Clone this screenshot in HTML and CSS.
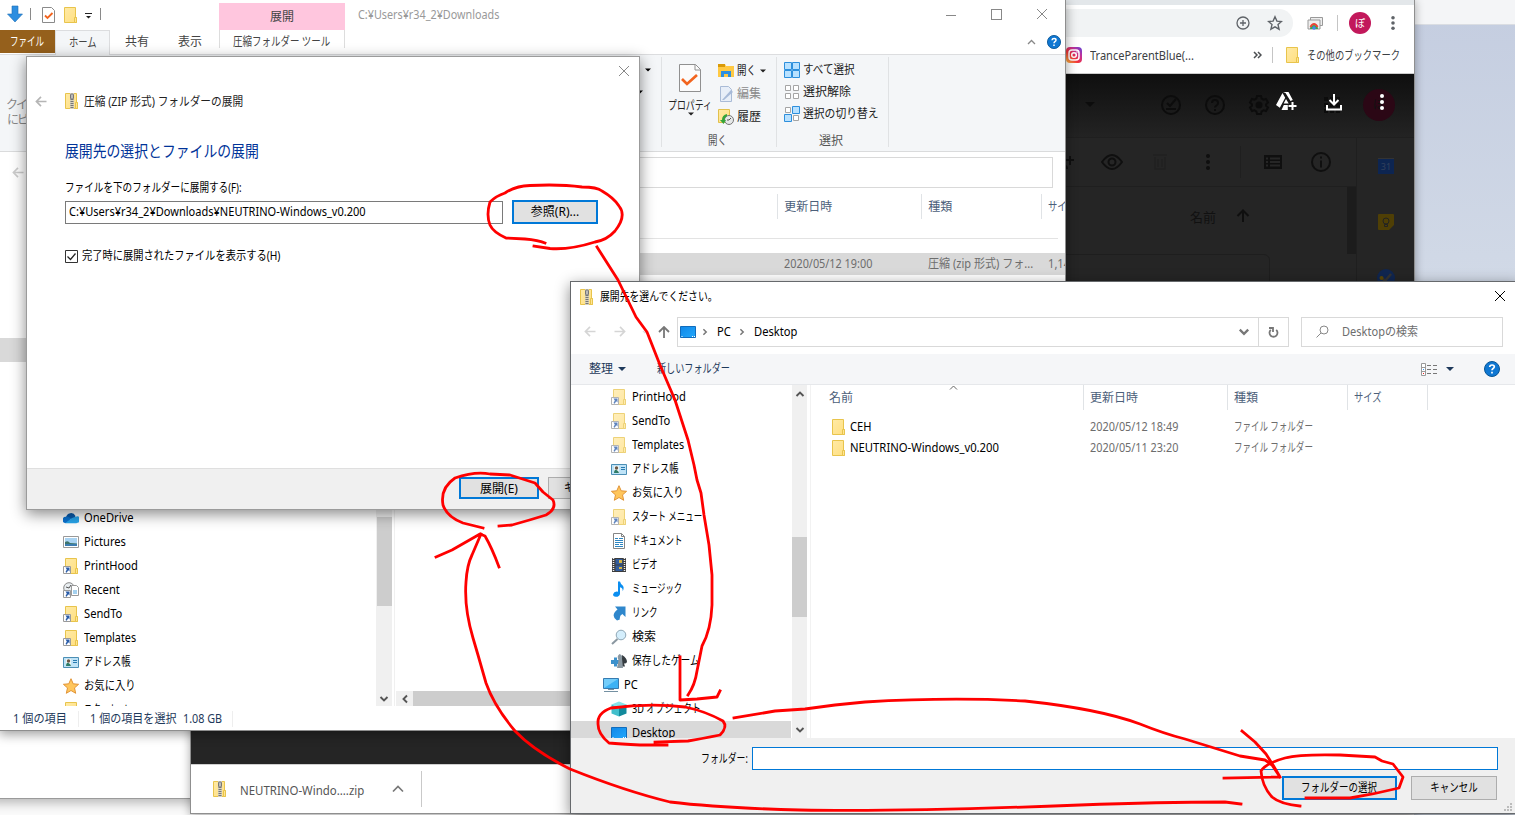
FILE: index.html
```html
<!DOCTYPE html>
<html lang="ja">
<head>
<meta charset="utf-8">
<title>展開先を選んでください。</title>
<link rel="stylesheet" href="styles.css">
</head>
<body>
<svg class="defs" width="0" height="0">
  <defs>
    <linearGradient id="gold" x1="0" y1="0" x2="1" y2="1"><stop offset="0" stop-color="#ffeaa6"/><stop offset="1" stop-color="#ffdf80"/></linearGradient>
    <linearGradient id="screen" x1="0" y1="0" x2="1" y2="1"><stop offset="0" stop-color="#1188e8"/><stop offset="1" stop-color="#22a8fc"/></linearGradient>
    <linearGradient id="insta" x1="0" y1="1" x2="1" y2="0"><stop offset="0" stop-color="#fdc13c"/><stop offset=".4" stop-color="#f3313b"/><stop offset=".7" stop-color="#c0309c"/><stop offset="1" stop-color="#5a45d8"/></linearGradient>
  </defs>
  <symbol id="folder" viewBox="0 0 16 16"><path d="M2.5.5h11v10h1v5h-12z" fill="url(#gold)" stroke="#e8c44c"/><path d="M12.5 15.500v-5h2v5z" fill="#ffe594" stroke="#e8c44c"/></symbol>
  <symbol id="link-folder" viewBox="0 0 16 16"><use href="#folder" width="16" height="16"/><path d="M.5 8.500h7v7h-7z" fill="#fff" stroke="#9a9a9a"/><path d="M2.500 9.500h4v4l-1.300-1.300-1.500 2.500-1.200-.8 1.300-2.500z" fill="#2a5ca8"/></symbol>
  <symbol id="zip" viewBox="0 0 16 16"><path d="M1.500.5h11v9h1v6h-12z" fill="url(#gold)" stroke="#e8c44c"/><path d="M11.500 15.500v-6h2v6z" fill="#ffe594" stroke="#e8c44c"/><path d="M6 0h4v16H6z" fill="#d8d2bd"/><path d="M8 6v10" stroke="#777" stroke-width="3" stroke-dasharray="1 1"/><rect x="6.500" y="1" width="3" height="5" rx="1" fill="#bbb" stroke="#777"/></symbol>
  <symbol id="onedrive" viewBox="0 0 16 16"><path d="M3 7.500A5 5 0 0 1 12.500 6L11 10z" fill="#0a5cad"/><path d="M2.500 13A3 3 0 0 1 3 6.800Q5 6 8 8.500L6 13z" fill="#0b72cf"/><path d="M2 13.200L9 8l4.500-1.500a3 3 0 0 1 1.500 6q-.6.700-2 .700z" fill="#28a5ea"/></symbol>
  <symbol id="picture" viewBox="0 0 16 16"><path d="M.5 2.500h15v11H.5z" fill="#fff" stroke="#999"/><path d="M2 4h12v8H2z" fill="#a9d3f2"/><path d="M2 8q3-2 5 1l7 .5V12H2z" fill="#3d746c"/><path d="M2 10h12v2H2z" fill="#3c7db0"/></symbol>
  <symbol id="recent" viewBox="0 0 16 16"><circle cx="6" cy="6" r="5.300" fill="#e8edf0" stroke="#888"/><path d="M3 5l3 1 2-3" fill="none" stroke="#555"/><path d="M8.500 3.500h5l2 2v8h-7z" fill="#fff" stroke="#999"/><path d="M10 9h4M10 11h4" stroke="#4aa3df"/><path d="M.5 8.500h7v7h-7z" fill="#fff" stroke="#9a9a9a"/><path d="M2.500 9.500h4v4l-1.300-1.300-1.500 2.500-1.200-.8 1.300-2.500z" fill="#2a5ca8"/></symbol>
  <symbol id="contact" viewBox="0 0 16 16"><path d="M.5 3.500h15v10H.5z" fill="#bfe3f7" stroke="#4c8fb5"/><path d="M3 5h5v7H3z" fill="#edf5f5"/><circle cx="5.500" cy="7" r="1.700" fill="#6b5846"/><path d="M3 12q.3-4 2.500-3T8 12z" fill="#2e7c68"/><path d="M10 6.500h4M10 8.500h4" stroke="#287aaf"/></symbol>
  <symbol id="star" viewBox="0 0 16 16"><path d="M8 .7l2.200 5.100 5.400.5-4.100 3.600 1.200 5.400L8 12.500l-4.700 2.800 1.200-5.400L.4 6.300l5.400-.5z" fill="#ffc65c" stroke="#e19438"/></symbol>
  <symbol id="document" viewBox="0 0 16 16"><path d="M2.500.5h8l3 3v12h-11z" fill="#fff" stroke="#858585"/><path d="M10.500.5v3h3" fill="none" stroke="#858585"/><path d="M4 5.500h3M8 5.500h4M4 7.500h8M4 9.500h8M4 11.500h4M9 11.500h3M4 13.500h8" stroke="#2e86c1"/></symbol>
  <symbol id="video" viewBox="0 0 16 16"><path d="M1 1h14v14H1z" fill="#3c3c3c"/><path d="M2.500 1v14M13.500 1v14" stroke="#eee" stroke-width="1.500" stroke-dasharray="1 1"/><path d="M4.500 2h7v5.500h-7zM4.500 8.500h7V14h-7z" fill="#315c9d"/><path d="M8 3h3v3H8zM8 10h3v2H8z" fill="#d5b33f"/></symbol>
  <symbol id="music" viewBox="0 0 16 16"><path d="M7 .5h2q.5 2.300 2.500 3.800 2.200 2 .2 6Q12 7 9 6.300V13q-.8 3-4.200 2.800-3-.3-2.700-2.600Q3 10 7 10.700z" fill="#0b8ef0"/></symbol>
  <symbol id="shortcut" viewBox="0 0 16 16"><path d="M4 1.500h10.500V12l-3.200-3q-3 1.500-2.500 5.500L6 15.500Q-1 10.500 6.500 4.500z" fill="#2f87cc"/></symbol>
  <symbol id="magnifier" viewBox="0 0 16 16"><path d="M1 15l5.500-5" stroke="#8a97a0" stroke-width="2"/><circle cx="10" cy="6" r="4.800" fill="#d4eefc" stroke="#8fa7b5"/></symbol>
  <symbol id="games" viewBox="0 0 16 16"><path d="M0 7h3V4.500h3V7h2v4H6v2.500H3V11H0z" fill="#3c91cc"/><path d="M11 2q5 3 5 7-1 2-3 1.500l1 3h-3z" fill="#353b40"/><path d="M8.500 1q3.500 1 2.500 4.500L12 15H6l1.500-8Q5.500 3 8.500 1z" fill="#8b98a1"/></symbol>
  <symbol id="pc" viewBox="0 0 16 16"><path d="M.5 1.500h15v10H.5z" fill="#3cb2f5" stroke="#367bb0"/><path d="M1 2h14L1 11z" fill="#73cdfa"/><path d="M1 14.500h14M5 12.500h6" stroke="#7490a2"/></symbol>
  <symbol id="cube" viewBox="0 0 16 16"><path d="M8 .5l7.500 3L8 6.500.5 3.500z" fill="#86e3e9"/><path d="M.5 3.500L8 6.500v9l-7.500-3z" fill="#42bfcb"/><path d="M15.500 3.500L8 6.500v9l7.500-3z" fill="#128a9c"/></symbol>
  <symbol id="desktop" viewBox="0 0 16 16"><path d="M.5 2.500h15v11H.5z" fill="url(#screen)" stroke="#116cbc"/><path d="M1.500 12.500h2M12 12.500h3" stroke="#fff" stroke-dasharray="1 1"/></symbol>
  <symbol id="help" viewBox="0 0 16 16"><circle cx="8" cy="8" r="7.500" fill="#0f77d2" stroke="#075596"/><path d="M5.700 6q.2-2 2.400-2 2.200 0 2.200 1.800 0 1-1.200 1.700Q8 8.300 8 9.300M8 10.800v1.700" fill="none" stroke="#fff" stroke-width="1.700"/></symbol>
  <symbol id="back" viewBox="0 0 12 12"><path d="M12 6H1M6 1L1 6l5 5" fill="none" stroke="currentColor" stroke-width="1.800"/></symbol>
  <symbol id="cross" viewBox="0 0 12 12"><path d="M1 1l10 10M11 1L1 11" fill="none" stroke="currentColor"/></symbol>
  <symbol id="caret" viewBox="0 0 8 8"><path d="M0 2h8L4 6z" fill="currentColor"/></symbol>
  <symbol id="chev" viewBox="0 0 10 10"><path d="M1.500 3L5 6.500 8.500 3" fill="none" stroke="currentColor" stroke-width="1.900"/></symbol>
  <symbol id="checkdoc" viewBox="0 0 22 28"><path d="M.5.500h16l5 5v22h-21z" fill="#fbfbfb" stroke="#909090"/><path d="M16 .5v5.500h5.500" fill="none" stroke="#909090"/><path d="M3 15l5 5 10-9" fill="none" stroke="#f2641e" stroke-width="2.700"/></symbol>
  <symbol id="dots" viewBox="0 0 6 18"><circle cx="3" cy="3" r="2" fill="currentColor"/><circle cx="3" cy="9" r="2" fill="currentColor"/><circle cx="3" cy="15" r="2" fill="currentColor"/></symbol>
</svg>

<main class="screen">
  <section class="back-right"><div class="back-bar"></div></section>
  <section class="back-left"></section>

  <section class="chrome">
    <div class="tabstrip"></div>
    <div class="chrome-bar">
      <div class="omnibox">
        <svg width="14" height="14" viewBox="0 0 14 14"><circle cx="7" cy="7" r="6" fill="none" stroke="#5f6368" stroke-width="1.300"/><path d="M4 7h6M7 4v6" stroke="#5f6368" stroke-width="1.300"/></svg>
        <svg width="16" height="16" viewBox="0 0 16 16"><path d="M8 1.800l1.900 4.300 4.600.4-3.500 3.100 1.100 4.600L8 11.800l-4.100 2.400L5 9.600 1.500 6.500l4.600-.4z" fill="none" stroke="#5f6368" stroke-width="1.400"/></svg>
      </div>
      <svg class="media" width="16" height="14" viewBox="0 0 16 14"><path d="M3.500 4V1.500h12v8H13" fill="#eee" stroke="#999"/><path d="M1 4h12v9H1z" fill="#eee" stroke="#999"/><path d="M3 13a4 4 0 0 1 8 0z" fill="#34a853"/><path d="M3.500 11q1.500-3 3.500-3t3.500 3" fill="none" stroke="#ea4335" stroke-width="2"/><circle cx="7" cy="12" r="1.700" fill="#4285f4"/></svg>
      <span class="bar-sep"></span><span class="avatar">ぽ</span>
      <svg class="kebab" width="6" height="16"><use href="#dots"/></svg>
    </div>
    <div class="bookmarks">
      <svg width="16" height="16" viewBox="0 0 16 16"><rect width="16" height="16" rx="4" fill="url(#insta)"/><rect x="3" y="3" width="10" height="10" rx="3" fill="none" stroke="#fff" stroke-width="1.500"/><circle cx="8" cy="8" r="2.300" fill="none" stroke="#fff" stroke-width="1.500"/><circle cx="11" cy="5" r=".8" fill="#fff"/></svg>
      <span class="bm-name t f92">TranceParentBlue(...</span>
      <svg class="bm-more" width="9" height="8" viewBox="0 0 9 8"><path d="M1 1l3 3-3 3M5 1l3 3-3 3" fill="none" stroke="#4c4f52" stroke-width="1.500"/></svg>
      <span class="bm-sep"></span>
      <svg class="bm-folder" width="16" height="16"><use href="#folder"/></svg>
      <span class="t f78">その他のブックマーク</span>
    </div>
    <div class="page">
      <div class="drive-top">
        <svg class="dim" width="10" height="6" viewBox="0 0 10 6"><path d="M0 0h10L5 5z" fill="#0c0c0c"/></svg>
        <svg class="dim d1" width="22" height="22" viewBox="0 0 22 22"><circle cx="11" cy="11" r="9" fill="none" stroke="#0c0c0c" stroke-width="2"/><path d="M7 9l3 3 6-7M6 15h10" fill="none" stroke="#0c0c0c" stroke-width="2"/></svg>
        <svg class="dim d2" width="22" height="22" viewBox="0 0 22 22"><circle cx="11" cy="11" r="9" fill="none" stroke="#0c0c0c" stroke-width="2"/><path d="M8 9q0-3 3-3t3 3q0 1.500-1.500 2.500T11 13.500M11 15v2" fill="none" stroke="#0c0c0c" stroke-width="2"/></svg>
        <svg class="dim d2" width="22" height="22" viewBox="0 0 22 22"><path d="M9 2h4l.6 2.500 2 1.200L18 5l2 3.500-1.900 1.700v1.600L20 13.500 18 17l-2.400-.7-2 1.200L13 20H9l-.6-2.500-2-1.200L4 17l-2-3.500 1.900-1.700v-1.600L2 8.500 4 5l2.400.7 2-1.200z" fill="none" stroke="#0c0c0c" stroke-width="2"/><circle cx="11" cy="11" r="3.500" fill="#0c0c0c"/></svg>
        <svg class="d3" width="22" height="20" viewBox="0 0 22 20"><path d="M8 1h5.500l4.300 8-2.300 1-5-8zM7.500 2l2.700 4.700-5.400 10L1 14zM6.500 19l2.300-5h4v5zM11 8l2.700 4.500h-5z" fill="#fff"/><path d="M17.500 11v8M13.500 15h8" stroke="#fff" stroke-width="2"/></svg>
        <span class="grid-dl"><svg width="18" height="18" viewBox="0 0 18 18"><path d="M1 3h16M1 9h16M1 15h16" stroke="#0c0c0c" stroke-width="4" stroke-dasharray="4 2"/></svg><svg class="dl" width="16" height="17" viewBox="0 0 16 17"><path d="M8 0v10M3.500 6L8 10.500 12.500 6M1 11v4.500h14V11" fill="none" stroke="#fff" stroke-width="2"/></svg></span>
        <span class="dark-avatar">ぽ<svg width="6" height="18"><use href="#dots"/></svg></span>
      </div>
      <div class="drive-body">
        <div class="drive-main">
          <div class="drive-tools">
            <svg width="10" height="16" viewBox="0 0 10 16"><path d="M5 2v9M1 6h8M0 12q2 0 2 3" fill="none" stroke="#0f0f0f" stroke-width="2"/></svg>
            <svg class="g1" width="22" height="16" viewBox="0 0 22 16"><path d="M1 8q10-14 20 0Q11 22 1 8z" fill="none" stroke="#0f0f0f" stroke-width="2"/><circle cx="11" cy="8" r="3.500" fill="none" stroke="#0f0f0f" stroke-width="2"/></svg>
            <svg class="g2" width="16" height="18" viewBox="0 0 16 18"><path d="M1 2h14M3 4v12h10V4M6 6v8M10 6v8" fill="none" stroke="#202020" stroke-width="1.500"/></svg>
            <svg class="g3 ink" width="6" height="18"><use href="#dots"/></svg>
            <span class="g-sep"></span>
            <svg class="g4" width="18" height="14" viewBox="0 0 18 14"><path d="M0 0h18v14H0z" fill="#0f0f0f"/><path d="M2 3.500h2M6 3.500h10M2 7h2M6 7h10M2 10.500h2M6 10.500h10" stroke="#262626" stroke-width="1.800"/></svg>
            <svg class="g5" width="20" height="20" viewBox="0 0 20 20"><circle cx="10" cy="10" r="9" fill="none" stroke="#0f0f0f" stroke-width="2"/><path d="M10 4.500v2M10 8.500v7" stroke="#0f0f0f" stroke-width="2"/></svg>
          </div>
          <div class="drive-name"><span>名前</span><svg width="14" height="14" viewBox="0 0 14 14"><path d="M7 13V2M1.500 7L7 1.500 12.500 7" fill="none" stroke="#0f0f0f" stroke-width="2"/></svg></div>
          <div class="drive-card"></div>
        </div>
        <div class="drive-side">
          <span class="cal">31</span>
          <svg class="keep" width="16" height="16" viewBox="0 0 16 16"><path d="M1 0h14q1 0 1 1v10l-5 5H1q-1 0-1-1V1q0-1 1-1z" fill="#4f3f05"/><circle cx="8" cy="7" r="3" fill="none" stroke="#222"/><path d="M6.500 10.500h3v2h-3z" fill="none" stroke="#222"/></svg>
          <svg class="task" width="18" height="18" viewBox="0 0 18 18"><circle cx="9" cy="9" r="9" fill="#102650"/><path d="M5 9l3 3 6-7" fill="none" stroke="#333" stroke-width="2.500"/><circle cx="4.500" cy="9" r="2" fill="#5b4705"/></svg>
        </div>
      </div>
    </div>
    <div class="downloads">
      <svg width="16" height="16"><use href="#zip"/></svg><span class="t dlname">NEUTRINO-Windo....zip</span>
      <svg class="dlup" width="12" height="8" viewBox="0 0 12 8"><path d="M1 6.500l5-5 5 5" fill="none" stroke="#777" stroke-width="1.700"/></svg><span class="dlsep"></span>
    </div>
  </section>

  <section class="explorer">
    <div class="ex-title">
      <svg class="qa1" width="16" height="18" viewBox="0 0 16 18"><path d="M5 1h6v8h4.500L8 17 .5 9H5z" fill="#2d8ee0" stroke="#1f6fb7" stroke-width=".6"/></svg>
      <span class="qsep"></span>
      <svg class="qa2" width="13" height="16" viewBox="0 0 13 16"><path d="M.5.500h9l3 3v12H.5z" fill="#fff" stroke="#8a8a8a"/><path d="M3 8.500l2.500 2.500 5-5" fill="none" stroke="#f2641e" stroke-width="1.800"/></svg>
      <svg class="qa3" width="16" height="16"><use href="#folder"/></svg>
      <svg class="qa4" width="7" height="6" viewBox="0 0 7 6"><path d="M0 0h7v1H0zM1 3h5L3.500 5.500z" fill="#222"/></svg>
      <span class="qsep q2"></span>
      <span class="tool-tab">展開</span>
      <span class="ex-path t f90">C:¥Users¥r34_2¥Downloads</span>
      <span class="min"></span><span class="max"></span><svg class="ex-x" width="12" height="12"><use href="#cross"/></svg>
    </div>
    <div class="tabs">
      <span class="tab file"><span class="t f72">ファイル</span></span>
      <span class="tab home"><span class="t f78">ホーム</span></span>
      <span class="tab share">共有</span><span class="tab view">表示</span>
      <span class="tab ctx"><span class="t f80">圧縮フォルダー ツール</span></span>
      <svg class="fold" width="9" height="6" viewBox="0 0 9 6"><path d="M1 5l3.500-3.500L8 5" fill="none" stroke="#888" stroke-width="1.300"/></svg>
      <svg width="14" height="14"><use href="#help"/></svg>
    </div>
    <div class="ribbon">
      <div class="pin">クイッ<br>&nbsp;にピン</div>
      <div class="under"><svg width="6" height="6"><use href="#caret"/></svg><svg width="6" height="6"><use href="#caret"/></svg></div>
      <div class="grp open">
        <div class="grp-row">
          <div class="props"><svg width="22" height="28"><use href="#checkdoc"/></svg><span class="t f75">プロパティ</span><svg class="pc" width="6" height="6"><use href="#caret"/></svg></div>
          <div class="cmds">
            <div class="cmd"><svg width="16" height="16" viewBox="0 0 16 16"><path d="M0 1h7l1 2h8v11H0z" fill="#ffc943"/><path d="M0 1h7v3H0z" fill="#d99a08"/><path d="M3 8h10v6h-3v-3H6v3H3z" fill="#2d8fe0"/></svg><span class="t f80">開く</span><svg class="cc" width="6" height="6"><use href="#caret"/></svg></div>
            <div class="cmd off"><svg width="16" height="16" viewBox="0 0 16 16"><path d="M2.500.500h8l3 3v12h-11z" fill="#e7eef8" stroke="#a9bbd6"/><path d="M4 14l9-10 2 2-9 8z" fill="#a7bad8"/></svg>編集</div>
            <div class="cmd"><svg width="16" height="16" viewBox="0 0 16 16"><path d="M.5.500h11v13H.5z" fill="url(#gold)" stroke="#e1c04c"/><circle cx="11" cy="11" r="4.500" fill="#e5e8e8" stroke="#777"/><path d="M11 11l2-2M11 11H9" fill="none" stroke="#555"/><path d="M9 5q-5 1-5 6H2l3.500 4L8 11H6.500Q6.500 8 9 7z" fill="#34a53a"/></svg>履歴</div>
          </div>
        </div>
        <div class="cap"><span class="t f80">開く</span></div>
      </div>
      <div class="grp sel">
        <div class="sels">
          <div class="cmd"><svg width="16" height="16" viewBox="0 0 16 16"><path d="M.5.500h7v7h-7zM8.500.500h7v7h-7zM.5 8.500h7v7h-7zM8.500 8.500h7v7h-7z" fill="#b8e1ff" stroke="#2d8fdc"/></svg><span class="t f88">すべて選択</span></div>
          <div class="cmd"><svg width="16" height="16" viewBox="0 0 16 16"><path d="M1.500 1.500h5v5h-5zM9.500 1.500h5v5h-5zM1.500 9.500h5v5h-5zM9.500 9.500h5v5h-5z" fill="#fff" stroke="#a5a5a5"/></svg>選択解除</div>
          <div class="cmd"><svg width="16" height="16" viewBox="0 0 16 16"><path d="M1.500 1.500h5v5h-5zM9.500 9.500h5v5h-5z" fill="#fff" stroke="#a5a5a5"/><path d="M8.500.500h7v7h-7zM.5 8.500h7v7h-7z" fill="#b8e1ff" stroke="#2d8fdc"/></svg><span class="t f90">選択の切り替え</span></div>
        </div>
        <div class="cap">選択</div>
      </div>
    </div>
    <div class="addr"><svg width="12" height="11"><use href="#back"/></svg><div class="addr-box"></div></div>
    <div class="ex-body">
      <div class="ex-tree">
        <div class="ex-hl"></div>
        <div class="node n1"><svg><use href="#onedrive"/></svg><span class="t">OneDrive</span></div>
        <div class="node"><svg><use href="#picture"/></svg><span class="t">Pictures</span></div>
        <div class="node"><svg><use href="#link-folder"/></svg><span class="t">PrintHood</span></div>
        <div class="node"><svg><use href="#recent"/></svg><span class="t">Recent</span></div>
        <div class="node"><svg><use href="#link-folder"/></svg><span class="t">SendTo</span></div>
        <div class="node"><svg><use href="#link-folder"/></svg><span class="t f90">Templates</span></div>
        <div class="node"><svg><use href="#contact"/></svg><span class="t f78">アドレス帳</span></div>
        <div class="node"><svg><use href="#star"/></svg><span class="t f85">お気に入り</span></div>
        <div class="node"><svg><use href="#link-folder"/></svg><span class="t f70">スタート メニュー</span></div>
      </div>
      <div class="vbar ex-v"><i class="thumb"></i><svg width="10" height="10"><use href="#chev"/></svg></div>
      <div class="ex-main">
        <div class="ex-cols"><span class="c1">更新日時</span><span class="c2">種類</span><span class="c3"><span class="t f78">サイズ</span></span></div>
        <div class="ex-line"></div>
        <div class="ex-file"><span class="c1"><span class="t f91">2020/05/12 19:00</span></span><span class="c2"><span class="t f92">圧縮 (zip 形式) フォ...</span></span><span class="c3"><span class="t">1,140,000 KB</span></span></div>
        <div class="hbar"><svg width="10" height="10"><use href="#chev"/></svg><i></i></div>
      </div>
    </div>
    <div class="status"><span class="s1"><span class="t f93">1 個の項目</span></span><span class="s2"><span class="t f92">1 個の項目を選択</span></span><span class="s3"><span class="t f90">1.08 GB</span></span></div>
  </section>

  <section class="zipdlg">
    <div class="z-close"><svg width="12" height="12"><use href="#cross"/></svg></div>
    <div class="z-head"><svg class="zb" width="12" height="11"><use href="#back"/></svg><svg class="zi" width="16" height="16"><use href="#zip"/></svg><span class="t f88y">圧縮 (ZIP 形式) フォルダーの展開</span></div>
    <h1 class="z-h"><span class="t">展開先の選択とファイルの展開</span></h1>
    <div class="z-label"><span class="t">ファイルを下のフォルダーに展開する(F):</span></div>
    <div class="z-row"><div class="z-input"><span class="t f92">C:¥Users¥r34_2¥Downloads¥NEUTRINO-Windows_v0.200</span></div><div class="btn primary browse">参照(R)...</div></div>
    <div class="z-check"><svg width="13" height="13" viewBox="0 0 13 13"><path d="M.5.500h12v12H.5z" fill="#fff" stroke="#333"/><path d="M2.500 6.500l3 3 5-6" fill="none" stroke="#222" stroke-width="1.300"/></svg><span class="t">完了時に展開されたファイルを表示する(H)</span></div>
    <div class="z-foot"><div class="btn primary ext">展開(E)</div><div class="btn can"><span class="t f78">キャンセル</span></div></div>
  </section>

  <section class="dlg">
    <div class="d-title"><svg width="16" height="16"><use href="#zip"/></svg><span class="t f87">展開先を選んでください。</span><svg class="d-x" width="12" height="12"><use href="#cross"/></svg></div>
    <div class="d-nav">
      <svg class="n-b" width="12" height="11"><use href="#back"/></svg><svg class="n-f" width="12" height="11"><use href="#back"/></svg><svg class="n-c" width="6" height="6"><use href="#chev"/></svg><svg class="n-u" width="12" height="12"><use href="#back"/></svg>
      <div class="crumbs"><svg width="16" height="16"><use href="#desktop"/></svg><svg class="sep" width="8" height="8"><use href="#chev"/></svg><span class="t pcx">PC</span><svg class="sep" width="8" height="8"><use href="#chev"/></svg><span class="t">Desktop</span><svg class="drop" width="12" height="12"><use href="#chev"/></svg></div>
      <div class="reload"><svg width="11" height="12" viewBox="0 0 11 12"><path d="M8.200 3.800a4 4 0 1 1-5.400 0M1 2h4v4" fill="none" stroke="#777" stroke-width="1.800"/></svg></div>
      <div class="search"><svg width="13" height="13" viewBox="0 0 13 13"><circle cx="8" cy="5" r="4" fill="none" stroke="#888"/><path d="M5 8l-4.500 4.500" stroke="#888"/></svg><span class="t f92">Desktopの検索</span></div>
    </div>
    <div class="d-tools"><span>整理</span><svg class="ca" width="8" height="8"><use href="#caret"/></svg><span class="newf"><span class="t f76">新しいフォルダー</span></span><svg class="vw" width="17" height="13" viewBox="0 0 17 13"><path d="M.5.500h4v12h-4zM.5 4.500h4M.5 8.500h4" fill="#fff" stroke="#999"/><path d="M6 2.500h4M12 2.500h4M6 6.500h4M12 6.500h4M6 10.500h4M12 10.500h4" stroke="#777"/><path d="M2 6h1v1H2z" fill="#39f"/><path d="M2 10h1v1H2z" fill="#e22"/></svg><svg class="ca cb" width="8" height="8"><use href="#caret"/></svg><svg class="hp" width="16" height="16"><use href="#help"/></svg></div>
    <div class="d-body">
      <div class="tree">
        <div class="node pale"><svg><use href="#link-folder"/></svg><span class="t">PrintHood</span></div>
        <div class="node pale"><svg><use href="#link-folder"/></svg><span class="t">SendTo</span></div>
        <div class="node pale"><svg><use href="#link-folder"/></svg><span class="t f90">Templates</span></div>
        <div class="node"><svg><use href="#contact"/></svg><span class="t f78">アドレス帳</span></div>
        <div class="node"><svg><use href="#star"/></svg><span class="t f85">お気に入り</span></div>
        <div class="node pale"><svg><use href="#link-folder"/></svg><span class="t f72">スタート メニュー</span></div>
        <div class="node"><svg><use href="#document"/></svg><span class="t f70">ドキュメント</span></div>
        <div class="node"><svg><use href="#video"/></svg><span class="t f72">ビデオ</span></div>
        <div class="node"><svg><use href="#music"/></svg><span class="t f70">ミュージック</span></div>
        <div class="node"><svg><use href="#shortcut"/></svg><span class="t f72">リンク</span></div>
        <div class="node"><svg><use href="#magnifier"/></svg>検索</div>
        <div class="node"><svg><use href="#games"/></svg><span class="t f82">保存したゲーム</span></div>
        <div class="node root"><svg><use href="#pc"/></svg><span class="t">PC</span></div>
        <div class="node"><svg><use href="#cube"/></svg><span class="t f76">3D オブジェクト</span></div>
        <div class="node on"><svg><use href="#desktop"/></svg><span class="t">Desktop</span></div>
      </div>
      <div class="vbar"><svg class="up" width="10" height="10"><use href="#chev"/></svg><i class="thumb"></i><svg width="10" height="10"><use href="#chev"/></svg></div>
      <div class="files">
        <div class="row head"><span class="k0">名前<svg class="sort" width="9" height="5" viewBox="0 0 9 5"><path d="M1 4.500L4.500 1 8 4.500" fill="none" stroke="#666"/></svg></span><span class="k1">更新日時</span><span class="k2">種類</span><span class="k3"><span class="t f78">サイズ</span></span></div>
        <div class="row"><span class="k0"><svg width="16" height="16"><use href="#folder"/></svg><span class="t">CEH</span></span><span class="k1"><span class="t f91">2020/05/12 18:49</span></span><span class="k2"><span class="t f72">ファイル フォルダー</span></span></div>
        <div class="row"><span class="k0"><svg width="16" height="16"><use href="#folder"/></svg><span class="t f94">NEUTRINO-Windows_v0.200</span></span><span class="k1"><span class="t f91">2020/05/11 23:20</span></span><span class="k2"><span class="t f72">ファイル フォルダー</span></span></div>
      </div>
    </div>
    <div class="d-foot">
      <div class="f-row"><span class="f-label"><span class="t f75">フォルダー:</span></span><span class="f-input"></span></div>
      <div class="f-btns"><div class="btn primary"><span class="t f80c">フォルダーの選択</span></div><div class="btn"><span class="t f80c">キャンセル</span></div></div>
      <svg class="grip" width="9" height="9" viewBox="0 0 9 9"><path d="M6 0h2v2H6zM3 3h2v2H3zM6 3h2v2H6zM0 6h2v2H0zM3 6h2v2H3zM6 6h2v2H6z" fill="#bcbcbc"/></svg>
    </div>
  </section>

  <svg class="marks" width="1515" height="815" viewBox="0 0 1515 815">
    <path d="M545 243Q538 240 525 239L506 238Q493 232 490 225Q486 215 490 202Q496 196 505 193Q515 186 530 185.500Q560 184 582 187Q597 187 602 191Q614 198 619 206Q627 216 615 231Q607 240 595 242Q570 250 550 248.500L534 246"/>
    <path d="M597 247L618 280L636 317L647 332L660 365L675 400L688 440L694 465L697 480L701 493L704 515L709 545L712 575L712 605Q711 630 702 646L697 671Q695 685 688 695M680 657V700L697 699L717 697L720 691"/>
    <path d="M667 745H640Q620 744 609 743Q598 734 598 724Q597 713 611 708Q650 703 685 707Q705 711 723 721Q728 727 720 735Q700 739 688 741L655 742"/>
    <path d="M734 718L775 711L805 709L835 705L865 702Q950 697 1025 701Q1100 709 1140 724Q1165 734 1185 739L1240 756L1265 760L1272 765L1280 777M1242 731L1255 742L1266 754L1273 765L1280 777L1224 778"/>
    <path d="M1300 806Q1280 804 1272 797Q1262 786 1261 771Q1266 763 1285 758Q1300 754 1340 755L1375 757L1382 761L1393 764L1403 777L1399 788Q1375 794 1350 798H1306"/>
    <path d="M1241 804L1225 802Q1160 802 1080 805Q900 812 800 810Q720 808 670 802Q625 791 570 769Q534 751 515 731Q494 706 486 683L478 655L473 638Q464 608 466 582Q467 565 472 555L481 534M436 557L452 550L480 534L485 536Q492 548 499 567"/>
    <path d="M483 528L463 523Q447 517 443 505Q440 488 455 478Q475 471 490 474L510 475L535 483L543 492L553 500Q557 509 546 515Q530 520 512 525L499 526"/>
  </svg>
</main>
</body>
</html>
```
FILE: styles.css
```css
* { box-sizing: border-box; }
body { margin: 0; font: 12px/16px "Noto Sans", "Noto Sans CJK JP", sans-serif; color: #000; }
.defs { position: absolute; }
.screen { position: relative; width: 1515px; height: 815px; overflow: hidden; background: #fafafa; }
svg { display: block; flex: none; }
span, div { white-space: nowrap; }
i { display: block; }

/* horizontally condensed labels */
.t { display: inline-block; transform-origin: 0 50%; transform: scaleX(.93); }
.t.f94 { transform: scaleX(.94); }
.t.f93 { transform: scaleX(.93); }
.t.f92 { transform: scaleX(.92); }
.t.f91 { transform: scaleX(.905); }
.t.f90 { transform: scaleX(.9); }
.t.f88 { transform: scaleX(.88); }
.t.f88y { transform: scaleX(.89); }
.t.f87 { transform: scaleX(.82); }
.t.f85 { transform: scaleX(.86); }
.t.f82 { transform: scaleX(.81); }
.t.f80 { transform: scaleX(.79); }
.t.f80c { transform: scaleX(.79); transform-origin: 50% 50%; }
.t.f78 { transform: scaleX(.775); }
.t.f76 { transform: scaleX(.76); }
.t.f75 { transform: scaleX(.74); }
.t.f72 { transform: scaleX(.71); }
.t.f70 { transform: scaleX(.7); }

.back-right { position: absolute; left: 1414px; top: 0; width: 101px; height: 815px; background: linear-gradient(#c4cde0, #d2dae7 300px); }
.back-bar { height: 25px; background: #f4f5f7; border-bottom: 1px solid #dadde2; }
.back-left { position: absolute; left: -10px; top: 600px; width: 250px; height: 199px; background: #fff; border: 1px solid #9a9a9a; box-shadow: 0 4px 10px #0004; }

/* browser */
.chrome { position: absolute; left: 190px; top: -1px; width: 1225px; height: 815px; display: flex; flex-direction: column; background: #fff; border: 1px solid #8f8f8f; box-shadow: 0 2px 9px #0005; }
.tabstrip { height: 5px; background: #e3e7ea; }
.chrome-bar { height: 36px; display: flex; align-items: center; padding-right: 18px; justify-content: flex-end; }
.omnibox { width: 500px; height: 28px; border-radius: 14px; background: #f1f3f4; display: flex; justify-content: flex-end; align-items: center; gap: 17px; padding-right: 10px; margin-right: 14px; }
.bar-sep { width: 1px; height: 16px; background: #c5c5c5; margin: 0 11px 0 14px; }
.avatar { width: 22px; height: 22px; border-radius: 50%; background: #c2185b; color: #fff; font-size: 10px; line-height: 22px; text-align: center; margin-right: 19px; }
.kebab { color: #5f6368; }
.bookmarks { height: 33px; display: flex; align-items: center; padding: 0 0 4px 875px; border-bottom: 1px solid #ccc; color: #3c4043; }
.bookmarks > * { flex: none; }
.bm-name { margin: 2px 0 0 8px; width: 150px; }
.bm-more { margin-left: 13px; }
.bm-sep { width: 1px; height: 16px; background: #c5c5c5; margin: 0 11px 0 10px; }
.bm-folder { margin-right: 7px; }
.bm-folder + .t { margin-top: 2px; }
.page { flex: 1; background: #252525; overflow: hidden; }
.drive-top { height: 64px; background: linear-gradient(#0f0f0f, #232323); border-bottom: 1px solid #1f1f1f; display: flex; align-items: center; padding: 0 0 2px 894px; }
.d1 { margin-left: 65px; }
.d2 { margin-left: 22px; }
.d3 { margin: -7px 0 0 5px; }
.grid-dl { position: relative; margin-left: 26px; }
.dl { position: absolute; left: 3px; top: -2px; }
.dark-avatar { position: relative; width: 32px; height: 32px; margin-left: 22px; border-radius: 50%; background: #2b0715; color: #111; line-height: 32px; text-align: center; }
.dark-avatar svg { position: absolute; left: 16px; top: 4px; color: #fff; }
.drive-body { display: flex; height: 640px; }
.drive-main { width: 1166px; border-right: 1px solid #1f1f1f; }
.drive-tools { height: 49px; border-bottom: 1px solid #1f1f1f; display: flex; align-items: center; padding-left: 874px; }
.g1 { margin-left: 26px; }
.g2 { margin-left: 29px; }
.g3 { margin-left: 37px; }
.ink { color: #0f0f0f; }
.g-sep { width: 1px; height: 32px; background: #1f1f1f; margin: 0 23px 0 29px; }
.g5 { margin-left: 29px; }
.drive-name { width: 1165px; height: 67px; display: flex; align-items: flex-start; padding: 22px 0 0 999px; gap: 20px; font-size: 13px; color: #111; border-right: 9px solid #1c1c1c; }
.drive-card { width: 1079px; height: 60px; border: 1px solid #1e1e1e; border-radius: 6px; }
.drive-side { padding: 20px 0 0 21px; }
.cal { display: block; width: 16px; height: 16px; background: #0d2551; color: #33405c; font-size: 9px; text-align: center; border-top: 1px solid #333; }
.keep { margin-top: 40px; }
.task { margin: 39px 0 0 -1px; }
.downloads { height: 49px; border-top: 1px solid #cfcfcf; display: flex; align-items: center; padding: 0 0 0 21px; color: #555; }
.dlname { margin: 3px 0 0 12px; width: 141px; font-size: 12.300px; }
.dlup { margin-left: 11px; }
.dlsep { width: 1px; height: 36px; margin-left: 17px; background: #c9c9c9; }

/* file explorer */
.explorer { position: absolute; left: -1px; top: -1px; width: 1067px; height: 732px; background: #fff; border: 1px solid #8e8e8e; box-shadow: 0 3px 11px #0006; display: flex; flex-direction: column; }
.ex-title { height: 30px; display: flex; align-items: center; }
.ex-title > * { flex: none; }
.qa1 { margin: -2px 0 0 7px; }
.qsep { width: 1px; height: 12px; margin: -2px 11px 0 7px; background: #8a8a8a; }
.qa3 { margin-left: 7px; }
.qa4 { margin: 2px 0 0 7px; }
.qsep.q2 { margin: -2px 0 0 8px; }
.tool-tab { width: 126px; height: 27px; margin: 3px 0 0 118px; background: #ffc6de; text-align: center; line-height: 27px; color: #444; }
.ex-path { width: 586px; margin: 0 0 0 13px; color: #999; }
.min { width: 10px; height: 1px; background: #888; margin-left: 2px; }
.max { width: 11px; height: 11px; border: 1px solid #888; margin: -2px 0 0 35px; }
.ex-x { margin: -2px 0 0 34px; color: #888; }
.tabs { height: 25px; display: flex; align-items: flex-start; border-bottom: 1px solid #dcdddf; color: #444; }
.tab { height: 24px; line-height: 23px; }
.file { width: 55px; height: 23px; background: #95601c; color: #fff; padding-left: 10px; }
.home { width: 55px; height: 25px; background: #f4f6f8; border: 1px solid #dcdddf; border-bottom: 0; padding-left: 13px; }
.share { margin-left: 15px; }
.view { margin-left: 29px; }
.ctx { width: 126px; height: 18px; margin-left: 17px; border: 1px solid #ddd; border-width: 0 1px; padding-left: 13px; }
.fold { margin: 9px 11px 0 682px; }
.fold + svg { margin-top: 5px; }
.ribbon { height: 97px; background: #f4f6f8; border-bottom: 1px solid #dadbdc; display: flex; }
.pin { width: 27px; overflow: hidden; padding: 42px 0 0 6px; line-height: 15px; letter-spacing: -2px; color: #888; }
.under { width: 634px; display: flex; flex-direction: column; align-items: flex-end; padding: 12px 10px 0 0; gap: 16px; }
.under svg:last-child { margin-right: 8px; }
.grp { margin: 2px 0 4px; border-right: 1px solid #e0e2e4; color: #222; }
.open { width: 116px; border-left: 1px solid #e0e2e4; }
.grp-row { display: flex; height: 76px; }
.props { width: 53px; padding: 7px 0 0 6px; }
.props > svg:first-child { margin: 0 0 6px 11px; }
.props span { display: block; }
.props .pc { margin: -3px 0 0 20px; }
.cmds { padding: 2px 0 0 3px; }
.cmd { height: 23px; display: flex; align-items: center; gap: 3px; }
.cmd .cc { margin-left: -4px; }
.off { color: #8a8a8a; }
.cap { text-align: center; color: #555; padding-right: 6px; }
.open .cap { padding-right: 0; padding-left: 3px; }
.sel { width: 112px; }
.sels { height: 76px; padding: 2px 0 0 7px; }
.sels .cmd { height: 22px; }
.sel .cap { padding-right: 3px; }
.addr { height: 36px; display: flex; align-items: center; padding-left: 12px; color: #ccc; }
.addr-box { height: 31px; width: 1025px; border: 1px solid #d9d9d9; margin: 4px 0 0 4px; }
.addr svg { margin-top: 5px; }
.ex-body { height: 518px; display: flex; }
.ex-tree { width: 377px; overflow: hidden; }
.ex-hl { height: 24px; margin-top: 150px; background: #d9d9d9; }
.node { height: 24px; display: flex; align-items: center; gap: 5px; padding-left: 63px; line-height: 24px; }
.node svg { width: 16px; height: 16px; }
.n1 { margin-top: 144px; }
.vbar { width: 16px; background: #f0f0f0; display: flex; flex-direction: column; align-items: center; justify-content: space-between; color: #555; }
.thumb { width: 15px; background: #cdcdcd; }
.ex-v .thumb { height: 89px; margin-top: 329px; }
.ex-v svg { margin-bottom: 2px; }
.ex-main { width: 672px; display: flex; flex-direction: column; border-left: 1px solid #f0f0f0; margin-left: 2px; overflow: hidden; }
.ex-cols, .ex-file { display: flex; height: 25px; margin-top: 6px; line-height: 25px; padding-left: 381px; color: #4c607a; }
.ex-cols { padding-left: 382px; }
.ex-cols > span { border-left: 1px solid #e0e3e6; }
.c1, .c2, .c3 { flex: none; width: 144px; padding-left: 6px; }
.c2 { width: 120px; }
.ex-line { width: 663px; height: 1px; background: #e3e3e3; margin-top: 19px; }
.ex-file { height: 22px; margin-top: 14px; background: #d9d9d9; color: #6d6d6d; line-height: 22px; }
.ex-file > span { padding-left: 8px; }
.hbar { height: 15px; margin: auto 0 0 1px; background: #f0f0f0; display: flex; align-items: center; color: #555; }
.hbar svg { transform: rotate(90deg); margin: 0 3px 0 4px; }
.hbar i { width: 400px; height: 15px; background: #cdcdcd; }
.status { height: 24px; display: flex; align-items: center; color: #1e395b; padding: 1px 0 0 13px; }
.status > span { flex: none; border-right: 1px solid #eee; }
.s1 { width: 66px; }
.status > .s2 { width: 93px; margin-left: 11px; border: 0; }
.s3 { width: 50px; }

/* extract wizard */
.zipdlg { position: absolute; left: 26px; top: 56px; width: 614px; height: 454px; background: #fff; border: 1px solid #9b9b9b; box-shadow: 0 4px 14px #0007; display: flex; flex-direction: column; }
.z-close { display: flex; justify-content: flex-end; padding: 8px 9px 0 0; color: #888; }
.z-head { height: 16px; margin-top: 16px; display: flex; align-items: center; color: #222; }
.z-head .t { margin-top: 1px; }
.zb { margin: 0 17px 0 8px; color: #b5b5b5; }
.zi { margin-right: 4px; }
.z-h { margin: 30px 0 0 38px; font-size: 16px; line-height: 24px; font-weight: 400; color: #003399; height: 24px; }
.z-h .t { transform: scaleX(.865); }
.z-label { margin: 17px 0 0 38px; height: 16px; }
.z-label .t { transform: scaleX(.8); }
.z-row { display: flex; margin: 5px 0 0 38px; }
.z-input { width: 438px; height: 23px; border: 1px solid #7a7a7a; padding-left: 3px; line-height: 20px; }
.btn { height: 24px; background: #e1e1e1; border: 1px solid #adadad; text-align: center; line-height: 22px; }
.primary { border: 2px solid #0078d7; line-height: 20px; }
.browse { width: 86px; margin: -1px 0 0 9px; }
.z-check { margin: 24px 0 0 38px; display: flex; align-items: center; gap: 4px; height: 16px; }
.z-check .t { transform: scaleX(.855); }
.z-foot { margin-top: auto; height: 41px; background: #f0f0f0; border-top: 1px solid #dfdfdf; display: flex; padding: 8px 0 0 432px; gap: 9px; }
.ext { width: 80px; height: 22px; line-height: 19px; }
.can { width: 56px; height: 22px; line-height: 20px; text-align: left; padding-left: 15px; }

/* folder picker */
.dlg { position: absolute; left: 570px; top: 281px; width: 950px; height: 533px; background: #fff; border: 1px solid #66696c; box-shadow: 0 4px 14px #0007; display: flex; flex-direction: column; }
.d-title { height: 29px; display: flex; align-items: center; padding-left: 8px; gap: 5px; }
.d-x { position: absolute; left: 923px; top: 8px; }
.d-nav { height: 43px; display: flex; align-items: center; padding: 0 0 2px 13px; }
.n-b { color: #d5d5d5; }
.n-f { color: #d5d5d5; transform: rotate(180deg); margin-left: 18px; }
.n-c { color: #ddd; margin: 0 10px 0 16px; }
.n-u { color: #777; transform: rotate(90deg); }
.crumbs { width: 582px; height: 30px; border: 1px solid #d9d9d9; margin-left: 7px; display: flex; align-items: center; padding-left: 2px; }
.crumbs .sep { transform: rotate(-90deg); color: #777; margin: 0 8px 0 5px; }
.crumbs .pcx { width: 12px; margin-right: 4px; }
.drop { margin: 0 8px 0 auto; color: #777; }
.reload { width: 30px; height: 30px; border: 1px solid #d9d9d9; border-left: 0; padding: 8px 9px; }
.search { width: 202px; height: 30px; border: 1px solid #d9d9d9; margin-left: 12px; display: flex; align-items: center; padding-left: 14px; gap: 13px; color: #6d6d6d; }
.d-tools { height: 31px; background: #f5f6f8; border-bottom: 1px solid #e6e8eb; color: #1e395b; display: flex; align-items: center; padding-left: 18px; }
.ca { margin-left: 5px; }
.newf { width: 120px; margin-left: 31px; }
.vw { margin-left: 644px; }
.cb { margin-left: 8px; }
.hp { margin-left: 30px; }
.d-body { height: 353px; display: flex; }
.tree { width: 221px; overflow: hidden; }
.tree .node { padding-left: 40px; width: 220px; }
.tree .root { padding-left: 32px; }
.pale svg { opacity: .75; }
.node.on { background: #d9d9d9; }
.d-body .vbar { width: 15px; }
.up { transform: rotate(180deg); margin-top: 4px; }
.d-body .thumb { height: 80px; margin-top: 138px; }
.d-body .vbar svg:last-child { margin: auto 0 3px; }
.files { flex: 1; margin-left: 3px; border-left: 1px solid #f2f2f2; }
.row { display: flex; height: 21px; align-items: center; color: #6d6d6d; }
.head { height: 25px; margin-bottom: 6px; color: #4c607a; }
.head span { height: 25px; line-height: 25px; }
.k0 { width: 272px; padding-left: 19px; display: flex; align-items: center; gap: 4px; color: #000; }
.head .k0 { padding-left: 18px; color: #4c607a; }
.sort { margin: -20px 0 0 92px; }
.k1 { width: 144px; padding-left: 7px; }
.k2 { width: 120px; padding-left: 7px; }
.k3 { width: 81px; padding-left: 7px; border-right: 1px solid #e0e3e6; }
.head .k1, .head .k2, .head .k3 { border-left: 1px solid #e0e3e6; padding-left: 6px; }
.d-foot { flex: 1; position: relative; background: #f0f0f0; padding-top: 9px; }
.f-row { display: flex; align-items: center; }
.f-label { width: 51px; margin-left: 130px; }
.f-input { width: 746px; height: 23px; border: 1px solid #0078d7; background: #fff; }
.f-btns { display: flex; gap: 14px; padding: 6px 0 0 711px; }
.f-btns .btn { width: 86px; }
.f-btns .primary { width: 115px; }
.grip { position: absolute; left: 933px; top: 65px; }

.marks { position: absolute; left: 0; top: 0; }
.marks path { fill: none; stroke: #f00; stroke-width: 2.800; stroke-linecap: square; stroke-linejoin: round; }
```
